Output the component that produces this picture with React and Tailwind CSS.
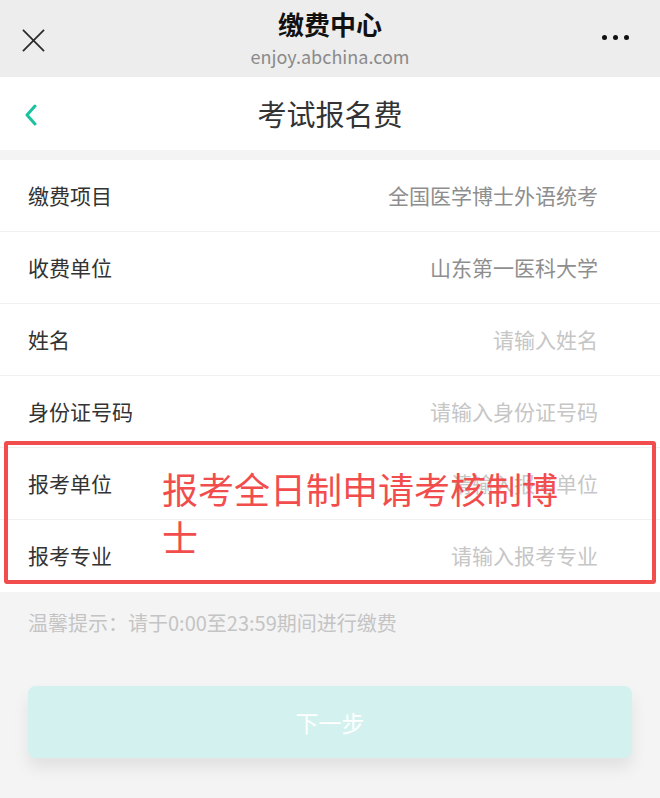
import React from "react";

const rows = [
  { label: "缴费项目", value: "全国医学博士外语统考", filled: true },
  { label: "收费单位", value: "山东第一医科大学", filled: true },
  { label: "姓名", value: "请输入姓名" },
  { label: "身份证号码", value: "请输入身份证号码" },
  { label: "报考单位", value: "请输入报考单位" },
  { label: "报考专业", value: "请输入报考专业" },
];

const Row = ({ label, value, filled, last }) => (
  <div
    className={`flex h-[72px] items-center justify-between pl-[28px] pr-[62px] ${
      last ? "" : "border-b border-[#f0f0f0]"
    }`}
  >
    <span className="text-[21px] text-[#333]">{label}</span>
    <span className={`text-[21px] ${filled ? "text-[#8e8e8e]" : "text-[#c6c6c6]"}`}>
      {value}
    </span>
  </div>
);

export default function App() {
  return (
    <div
      className="w-[660px] h-[798px] bg-[#f4f4f4] overflow-hidden"
      style={{ fontFamily: '"Noto Sans CJK SC", "Noto Sans", sans-serif' }}
    >
      {/* wechat top bar */}
      <div className="relative flex h-[77px] flex-col items-center bg-[#ededed] pt-[6px]">
        <svg
          className="absolute left-[22px] top-[29px]"
          width="23"
          height="23"
          viewBox="0 0 24 24"
          fill="none"
          stroke="#2a2a2a"
          strokeWidth="1.8"
        >
          <path d="M1 1 L23 23 M23 1 L1 23" />
        </svg>
        <div className="absolute right-[31px] top-[35px] flex gap-[6px]">
          <span className="block h-[5px] w-[5px] rounded-full bg-[#111]" />
          <span className="block h-[5px] w-[5px] rounded-full bg-[#111]" />
          <span className="block h-[5px] w-[5px] rounded-full bg-[#111]" />
        </div>
        <div className="text-[26px] font-bold leading-[36px] text-[#111]">缴费中心</div>
        <div className="mt-[2px] text-[18px] leading-[24px] text-[#8a8a8a]">
          enjoy.abchina.com
        </div>
      </div>

      {/* page header */}
      <div className="relative flex h-[73px] items-center justify-center bg-white">
        <svg
          className="absolute left-[24px] top-[27px]"
          width="14"
          height="22"
          viewBox="0 0 14 22"
          fill="none"
          stroke="#19c2a0"
          strokeWidth="3"
          strokeLinecap="round"
          strokeLinejoin="round"
        >
          <path d="M11 2 L3 11 L11 20" />
        </svg>
        <span className="text-[29px] text-[#333]">考试报名费</span>
      </div>

      <div className="mt-[10px] relative bg-white">
        {rows.map((r, i) => (
          <Row key={r.label} {...r} last={i === rows.length - 1} />
        ))}

        {/* red annotation box */}
        <div className="absolute left-[4px] right-[4px] top-[281px] h-[143px] rounded-[3px] border-[4px] border-[#f24d4d]" />
        <div className="absolute left-[162px] top-[304px] w-[410px] text-[36px] leading-[48px] text-[#f24d4d]">
          报考全日制申请考核制博士
        </div>
      </div>

      <div className="px-[28px] pt-[16px] text-[20px] leading-[30px] text-[#c4c4c4]">
        温馨提示：请于0:00至23:59期间进行缴费
      </div>

      <div className="px-[28px] pt-[48px]">
        <div className="flex h-[72px] items-center justify-center rounded-[8px] bg-[#d3f2ef] text-[23px] text-white shadow-[0_10px_16px_rgba(0,0,0,0.08)]">
          下一步
        </div>
      </div>
    </div>
  );
}
